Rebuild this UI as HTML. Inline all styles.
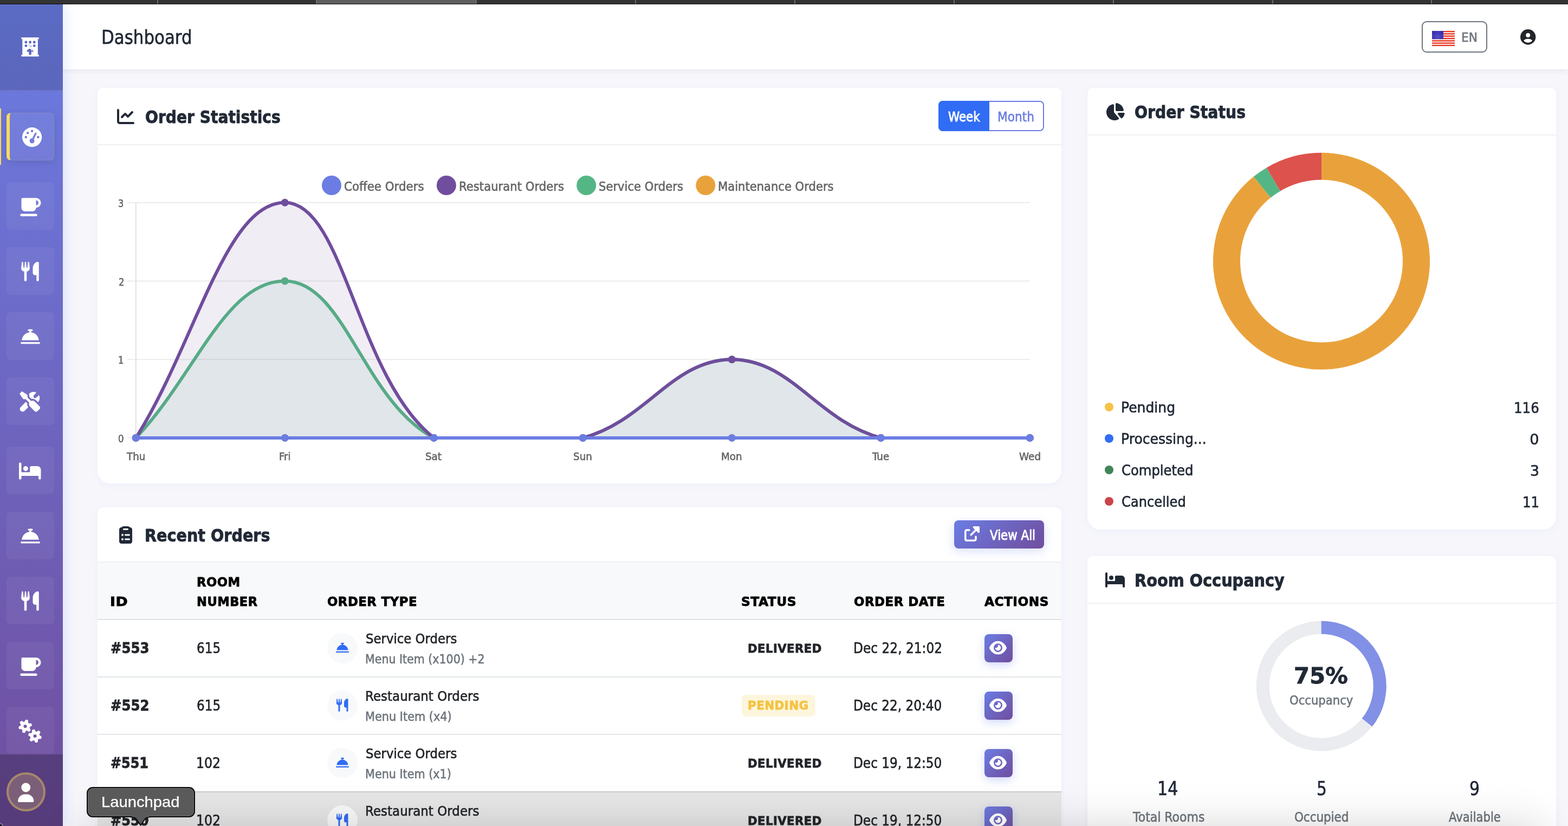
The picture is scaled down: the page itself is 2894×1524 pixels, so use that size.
<!DOCTYPE html>
<html lang="en"><head><meta charset="utf-8"><title>Dashboard</title>
<style>
html,body{margin:0;padding:0}
body{width:2894px;height:1524px;overflow:hidden;position:relative;background:#f6f6fb;font-family:'DejaVu Sans','Liberation Sans',sans-serif}
#p{position:absolute;left:0;top:0;width:2894px;height:1524px;overflow:hidden;will-change:transform}
.b{position:absolute}
.i{position:absolute;overflow:visible}
.t{position:absolute;white-space:nowrap;line-height:1;transform-origin:0 0}
</style></head>
<body><div id="p">
<div class="b" style="left:116px;top:8px;width:2778px;height:120px;background:#fff;box-shadow:0 3px 10px rgba(40,40,80,.07);"></div>
<div class="b" style="left:2624px;top:39px;width:121px;height:58px;border:2px solid #6e757c;border-radius:9px;background:#fff;box-sizing:border-box;"></div>
<svg class="i" style="left:2643px;top:57px;width:42px;height:28px" viewBox="0 0 42 28"><defs><pattern id="st" width="2.1" height="2.1" patternUnits="userSpaceOnUse"><rect width="2.1" height="2.1" fill="#241cab"/><circle cx="1.05" cy="1.05" r="0.5" fill="#c9c9f2"/></pattern></defs><rect width="42" height="28" fill="#fbe9e6"/><rect x="0" y="0.000" width="42" height="2.154" fill="#e8301c"/><rect x="0" y="4.308" width="42" height="2.154" fill="#e8301c"/><rect x="0" y="8.615" width="42" height="2.154" fill="#e8301c"/><rect x="0" y="12.923" width="42" height="2.154" fill="#e8301c"/><rect x="0" y="17.231" width="42" height="2.154" fill="#e8301c"/><rect x="0" y="21.538" width="42" height="2.154" fill="#e8301c"/><rect x="0" y="25.846" width="42" height="2.154" fill="#e8301c"/><rect x="0" y="0" width="21" height="15.1" fill="url(#st)"/></svg>
<svg class="i" style="left:2806.25px;top:54.20px;width:28.40px;height:28.40px;" viewBox="0 0 512 512"><path fill="#222529" d="M399 384.2c-22.1-38.4-63.6-64.2-111-64.2h-64c-47.4 0-88.9 25.8-111 64.2 35.2 39.2 86.2 63.8 143 63.8s107.8-24.7 143-63.8M0 256a256 256 0 1 1 512 0 256 256 0 1 1-512 0m256 16a72 72 0 1 0 0-144 72 72 0 1 0 0 144"/></svg>
<div class="b" style="left:0;top:8px;width:116px;height:1516px;background:linear-gradient(180deg,#6b7de3 0%,#704d9d 100%);box-shadow:4px 0 22px rgba(102,126,234,.16);"></div>
<div class="b" style="left:0px;top:8px;width:116px;height:160px;background:rgba(0,0,0,.14);"></div>
<div class="b" style="left:0px;top:166px;width:116px;height:2px;background:rgba(255,255,255,.1);"></div>
<svg class="i" style="left:37.85px;top:69.00px;width:35.20px;height:35.20px;" viewBox="0 0 512 512"><path fill="#fff" d="M16 24C16 10.7 26.7 0 40 0h432c13.3 0 24 10.7 24 24s-10.7 24-24 24h-8v416h8c13.3 0 24 10.7 24 24s-10.7 24-24 24H40c-13.3 0-24-10.7-24-24s10.7-24 24-24h8V48h-8c-13.3 0-24-10.7-24-24m208 88v32c0 8.8 7.2 16 16 16h32c8.8 0 16-7.2 16-16v-32c0-8.8-7.2-16-16-16h-32c-8.8 0-16 7.2-16 16m-96-16c-8.8 0-16 7.2-16 16v32c0 8.8 7.2 16 16 16h32c8.8 0 16-7.2 16-16v-32c0-8.8-7.2-16-16-16zm96 112v32c0 8.8 7.2 16 16 16h32c8.8 0 16-7.2 16-16v-32c0-8.8-7.2-16-16-16h-32c-8.8 0-16 7.2-16 16M352 96c-8.8 0-16 7.2-16 16v32c0 8.8 7.2 16 16 16h32c8.8 0 16-7.2 16-16v-32c0-8.8-7.2-16-16-16zM112 208v32c0 8.8 7.2 16 16 16h32c8.8 0 16-7.2 16-16v-32c0-8.8-7.2-16-16-16h-32c-8.8 0-16 7.2-16 16m240-16c-8.8 0-16 7.2-16 16v32c0 8.8 7.2 16 16 16h32c8.8 0 16-7.2 16-16v-32c0-8.8-7.2-16-16-16zm-64 192h43.8c9.9 0 17.5-9 14-18.2C332 329.7 297 304 256.1 304s-75.9 25.7-89.7 61.8c-3.5 9.2 4.1 18.2 14 18.2h43.8v80h64v-80z"/></svg>
<svg class="i" style="left:50px;top:78px;width:14px;height:18px" viewBox="50 78 14 18"><path d="M52.9 84.7L55.5 82.1L58.4 82.1L58.4 83.3L54.2 87.1L52.9 87.1Z" fill="#fff"/><path d="M57.0 90.2L58.7 92.9Q59.1 93.5 59.9 92.9" fill="none" stroke="#fff" stroke-width="1.2" stroke-linecap="round"/></svg>
<div class="b" style="left:0;top:166px;width:116px;height:1225px;overflow:hidden">
<div class="b" style="left:0;top:34px;width:2px;height:104px;background:#f9da5d"></div>
<div class="b" style="left:12px;top:42px;width:88px;height:88px;box-sizing:border-box;border-radius:8px;background:rgba(255,255,255,.06);border:1px solid rgba(255,217,61,.14);border-left:6px solid #f9da5d;box-shadow:0 3px 16px rgba(0,0,0,.10);"></div>
<svg class="i" style="left:40.90px;top:68.90px;width:36.20px;height:36.20px;" viewBox="0 0 512 512"><path fill="#fff" d="M0 256a256 256 0 1 1 512 0 256 256 0 1 1-512 0M288 96a32 32 0 1 0-64 0 32 32 0 1 0 64 0m-32 320c35.3 0 64-28.7 64-64 0-16.2-6-31.1-16-42.3l69.5-138.9c5.9-11.9 1.1-26.3-10.7-32.2s-26.3-1.1-32.2 10.7l-69.5 138.9c-1.7-.1-3.4-.2-5.1-.2-35.3 0-64 28.7-64 64s28.7 64 64 64m-80-272a32 32 0 1 0-64 0 32 32 0 1 0 64 0M96 288a32 32 0 1 0 0-64 32 32 0 1 0 0 64m352-32a32 32 0 1 0-64 0 32 32 0 1 0 64 0"/></svg>
<div class="b" style="left:12px;top:170px;width:88px;height:88px;border-radius:8px;background:rgba(255,255,255,.05);"></div>
<svg class="i" style="left:35.45px;top:197.10px;width:40.50px;height:36.00px;" viewBox="0 0 576 512"><path fill="#fff" d="M64 64c0-17.7 14.3-32 32-32h352c70.7 0 128 57.3 128 128s-57.3 128-128 128c0 53-43 96-96 96H160c-53 0-96-43-96-96zm448 96c0-35.3-28.7-64-64-64v128c35.3 0 64-28.7 64-64M64 448h384c17.7 0 32 14.3 32 32s-14.3 32-32 32H64c-17.7 0-32-14.3-32-32s14.3-32 32-32"/></svg>
<div class="b" style="left:12px;top:290px;width:88px;height:88px;border-radius:8px;background:rgba(255,255,255,.05);"></div>
<svg class="i" style="left:37.70px;top:317.10px;width:36.00px;height:36.00px;" viewBox="0 0 512 512"><path fill="#fff" d="M63.9 14.4C63.1 6.2 56.2 0 48 0S32.9 6.2 32 14.3L17.9 149.7c-1.3 6-1.9 12.1-1.9 18.2 0 45.9 35.1 83.6 80 87.7V480c0 17.7 14.3 32 32 32s32-14.3 32-32V255.6c44.9-4.1 80-41.8 80-87.7 0-6.1-.6-12.2-1.9-18.2L223.9 14.3C223.1 6.2 216.2 0 208 0s-15.1 6.2-15.9 14.4l-13.6 135.5c-.6 5.7-5.4 10.1-11.1 10.1-5.8 0-10.6-4.4-11.2-10.2L143.9 14.6C143.2 6.3 136.3 0 128 0s-15.2 6.3-15.9 14.6L99.8 149.8c-.5 5.8-5.4 10.2-11.2 10.2s-10.6-4.4-11.1-10.1zM448 0c-16 0-128 32-128 176v112c0 35.3 28.7 64 64 64h32v128c0 17.7 14.3 32 32 32s32-14.3 32-32V32c0-17.7-14.3-32-32-32"/></svg>
<div class="b" style="left:12px;top:410px;width:88px;height:88px;border-radius:8px;background:rgba(255,255,255,.05);"></div>
<svg class="i" style="left:37.70px;top:437.10px;width:36.00px;height:36.00px;" viewBox="0 0 512 512"><path fill="#fff" d="M216 64c-13.3 0-24 10.7-24 24s10.7 24 24 24h16v33.3C124.8 156.7 40.2 243.7 32.6 352h446.9c-7.7-108.3-92.3-195.3-199.5-206.7V112h16c13.3 0 24-10.7 24-24s-10.7-24-24-24zM24 400c-13.3 0-24 10.7-24 24s10.7 24 24 24h464c13.3 0 24-10.7 24-24s-10.7-24-24-24z"/></svg>
<div class="b" style="left:12px;top:530px;width:88px;height:88px;border-radius:8px;background:rgba(255,255,255,.05);"></div>
<svg class="i" style="left:35.45px;top:557.10px;width:40.50px;height:36.00px;" viewBox="0 0 576 512"><path fill="#fff" d="M70.8-6.7c5.4-5.4 13.8-6.2 20.2-2l118.9 79.2c8.9 5.9 14.2 15.9 14.2 26.6v49.6l90.8 90.8c33.3-15 73.9-8.9 101.2 18.5l126.1 126.1c18.7 18.7 18.7 49.1 0 67.9l-60.1 60.1c-18.7 18.7-49.1 18.7-67.9 0L288.1 384c-27.4-27.4-33.5-67.9-18.5-101.2L178.8 192h-49.6c-10.7 0-20.7-5.3-26.6-14.2L23.4 58.9c-4.2-6.3-3.4-14.8 2-20.2zm145 303.5c-6.3 36.9 2.3 75.9 26.2 107.2l-94.9 95c-28.1 28.1-73.7 28.1-101.8 0s-28.1-73.7 0-101.8l135.4-135.5 35.2 35.1zM384.1 0c20.1 0 39.4 3.7 57.1 10.5 10 3.8 11.8 16.5 4.3 24.1l-56.7 56.7c-3 3-4.7 7.1-4.7 11.3V144c0 8.8 7.2 16 16 16h41.4c4.2 0 8.3-1.7 11.3-4.7l56.7-56.7c7.6-7.5 20.3-5.7 24.1 4.3 6.8 17.7 10.5 37 10.5 57.1 0 43.2-17.2 82.3-45 111.1L450 222c-33.1-33-78.5-45.7-121.1-38.4l-56.8-56.8V97.1l-.2-5c-.8-12.4-4.4-24.3-10.5-34.9C290.8 22.2 334.8 0 384.1-.1z"/></svg>
<div class="b" style="left:12px;top:658px;width:88px;height:88px;border-radius:8px;background:rgba(255,255,255,.05);"></div>
<svg class="i" style="left:35.45px;top:685.10px;width:40.50px;height:36.00px;" viewBox="0 0 576 512"><path fill="#fff" d="M32 32c17.7 0 32 14.3 32 32v224h224V160c0-17.7 14.3-32 32-32h160c53 0 96 43 96 96v224c0 17.7-14.3 32-32 32s-32-14.3-32-32v-64H64v64c0 17.7-14.3 32-32 32S0 465.7 0 448V64c0-17.7 14.3-32 32-32m80 160a64 64 0 1 1 128 0 64 64 0 1 1-128 0"/></svg>
<div class="b" style="left:12px;top:778px;width:88px;height:88px;border-radius:8px;background:rgba(255,255,255,.05);"></div>
<svg class="i" style="left:37.70px;top:805.10px;width:36.00px;height:36.00px;" viewBox="0 0 512 512"><path fill="#fff" d="M216 64c-13.3 0-24 10.7-24 24s10.7 24 24 24h16v33.3C124.8 156.7 40.2 243.7 32.6 352h446.9c-7.7-108.3-92.3-195.3-199.5-206.7V112h16c13.3 0 24-10.7 24-24s-10.7-24-24-24zM24 400c-13.3 0-24 10.7-24 24s10.7 24 24 24h464c13.3 0 24-10.7 24-24s-10.7-24-24-24z"/></svg>
<div class="b" style="left:12px;top:898px;width:88px;height:88px;border-radius:8px;background:rgba(255,255,255,.05);"></div>
<svg class="i" style="left:37.70px;top:925.10px;width:36.00px;height:36.00px;" viewBox="0 0 512 512"><path fill="#fff" d="M63.9 14.4C63.1 6.2 56.2 0 48 0S32.9 6.2 32 14.3L17.9 149.7c-1.3 6-1.9 12.1-1.9 18.2 0 45.9 35.1 83.6 80 87.7V480c0 17.7 14.3 32 32 32s32-14.3 32-32V255.6c44.9-4.1 80-41.8 80-87.7 0-6.1-.6-12.2-1.9-18.2L223.9 14.3C223.1 6.2 216.2 0 208 0s-15.1 6.2-15.9 14.4l-13.6 135.5c-.6 5.7-5.4 10.1-11.1 10.1-5.8 0-10.6-4.4-11.2-10.2L143.9 14.6C143.2 6.3 136.3 0 128 0s-15.2 6.3-15.9 14.6L99.8 149.8c-.5 5.8-5.4 10.2-11.2 10.2s-10.6-4.4-11.1-10.1zM448 0c-16 0-128 32-128 176v112c0 35.3 28.7 64 64 64h32v128c0 17.7 14.3 32 32 32s32-14.3 32-32V32c0-17.7-14.3-32-32-32"/></svg>
<div class="b" style="left:12px;top:1018px;width:88px;height:88px;border-radius:8px;background:rgba(255,255,255,.05);"></div>
<svg class="i" style="left:35.45px;top:1045.10px;width:40.50px;height:36.00px;" viewBox="0 0 576 512"><path fill="#fff" d="M64 64c0-17.7 14.3-32 32-32h352c70.7 0 128 57.3 128 128s-57.3 128-128 128c0 53-43 96-96 96H160c-53 0-96-43-96-96zm448 96c0-35.3-28.7-64-64-64v128c35.3 0 64-28.7 64-64M64 448h384c17.7 0 32 14.3 32 32s-14.3 32-32 32H64c-17.7 0-32-14.3-32-32s14.3-32 32-32"/></svg>
<div class="b" style="left:12px;top:1138px;width:88px;height:88px;border-radius:8px;background:rgba(255,255,255,.05);"></div>
<svg class="i" style="left:33.20px;top:1165.10px;width:45.00px;height:36.00px;" viewBox="0 0 640 512"><path fill="#fff" d="M415.9 210.5c12.2-3.3 25 2.5 30.5 13.8l18.6 37.6c10.3 1.4 20.4 4.2 29.9 8.1l35-23.3c10.5-7 24.4-5.6 33.3 3.3l19.2 19.2c8.9 8.9 10.3 22.9 3.3 33.3l-23.3 34.9c1.9 4.7 3.6 9.6 5 14.7s2.3 10.1 3 15.2l37.7 18.6c11.3 5.6 17.1 18.4 13.8 30.5l-7 26.2c-3.3 12.1-14.6 20.3-27.2 19.5l-42-2.7c-6.3 8.1-13.6 15.6-21.9 22l2.7 41.9c.8 12.6-7.4 24-19.5 27.2l-26.2 7c-12.2 3.3-24.9-2.5-30.5-13.8l-18.6-37.6c-10.3-1.4-20.4-4.2-29.9-8.1l-35 23.3c-10.5 7-24.4 5.6-33.3-3.3l-19.2-19.2c-8.9-8.9-10.3-22.8-3.3-33.3l23.3-35c-1.9-4.7-3.6-9.6-5-14.7s-2.3-10.2-3-15.2L288.6 382c-11.3-5.6-17-18.4-13.8-30.5l7-26.2c3.3-12.1 14.6-20.3 27.2-19.5l41.9 2.7c6.3-8.1 13.6-15.6 21.9-22l-2.7-41.8c-.8-12.6 7.4-24 19.5-27.2l26.2-7zM448.4 340a44 44 0 1 0 .1 88 44 44 0 1 0-.1-88M224.9-45.5l26.2 7c12.1 3.3 20.3 14.7 19.5 27.2l-2.7 41.8c8.3 6.4 15.6 13.8 21.9 22l42-2.7c12.5-.8 23.9 7.4 27.2 19.5l7 26.2c3.2 12.1-2.5 24.9-13.8 30.5l-37.7 18.6c-.7 5.1-1.7 10.2-3 15.2s-3.1 10-5 14.7l23.3 35c7 10.5 5.6 24.4-3.3 33.3L307.3 262c-8.9 8.9-22.8 10.3-33.3 3.3L239 242c-9.5 3.9-19.6 6.7-29.9 8.1l-18.6 37.6c-5.6 11.3-18.4 17-30.5 13.8l-26.2-7c-12.2-3.3-20.3-14.7-19.5-27.2l2.7-41.9c-8.3-6.4-15.6-13.8-21.9-22l-42 2.7c-12.5.8-23.9-7.4-27.2-19.5l-7-26.2c-3.2-12.1 2.5-24.9 13.8-30.5l37.7-18.6c.7-5.1 1.7-10.1 3-15.2 1.4-5.1 3-10 5-14.7L55.1 46.5c-7-10.5-5.6-24.4 3.3-33.3L77.6-6c8.9-8.9 22.8-10.3 33.3-3.3l35 23.3c9.5-3.9 19.6-6.7 29.9-8.1l18.6-37.6c5.6-11.3 18.3-17 30.5-13.8M192.4 84a44 44 0 1 0 0 88 44 44 0 1 0 0-88"/></svg>
</div>
<div class="b" style="left:0px;top:1391px;width:116px;height:133px;background:rgba(0,0,0,.22);border-top:1px solid rgba(255,255,255,.1);box-sizing:border-box;"></div>
<div class="b" style="left:12px;top:1425px;width:72px;height:72px;border-radius:50%;box-sizing:border-box;border:4px solid #a5896b;background:#7b5f78;"></div>
<svg class="i" style="left:0;top:1512px;width:12px;height:12px" viewBox="0 1512 12 12"><circle cx="-1" cy="1525" r="6.2" fill="none" stroke="rgba(255,255,255,.22)" stroke-width="2.4"/><circle cx="-1" cy="1525" r="4.4" fill="#050505"/></svg>
<svg class="i" style="left:32.05px;top:1443.52px;width:31.50px;height:36.00px;" viewBox="0 0 448 512"><path fill="#fff" d="M224 248a120 120 0 1 0 0-240 120 120 0 1 0 0 240m-29.7 56C95.8 304 16 383.8 16 482.3c0 16.4 13.3 29.7 29.7 29.7h356.6c16.4 0 29.7-13.3 29.7-29.7 0-98.5-79.8-178.3-178.3-178.3z"/></svg>
<div class="b" style="left:180px;top:162px;width:1779px;height:730px;background:#fff;border-radius:11px 11px 24px 24px;box-shadow:0 3px 14px rgba(102,126,234,.055);"></div>
<div class="b" style="left:180px;top:266px;width:1779px;height:2px;background:#f0f0f0;"></div>
<div class="b" style="left:2007px;top:162px;width:865px;height:815px;background:#fff;border-radius:11px 11px 24px 24px;box-shadow:0 3px 14px rgba(102,126,234,.055);"></div>
<div class="b" style="left:2007px;top:248px;width:865px;height:2px;background:#f0f0f0;"></div>
<div class="b" style="left:180px;top:936px;width:1779px;height:700px;background:#fff;border-radius:11px 11px 24px 24px;box-shadow:0 3px 14px rgba(102,126,234,.055);"></div>
<div class="b" style="left:180px;top:1036px;width:1779px;height:2px;background:#f0f0f0;"></div>
<div class="b" style="left:2007px;top:1026px;width:865px;height:700px;background:#fff;border-radius:11px 11px 24px 24px;box-shadow:0 3px 14px rgba(102,126,234,.055);"></div>
<div class="b" style="left:2007px;top:1112px;width:865px;height:2px;background:#f0f0f0;"></div>
<svg class="i" style="left:216.00px;top:198.90px;width:32.00px;height:32.00px;" viewBox="0 0 512 512"><path fill="#212936" d="M64 64c0-17.7-14.3-32-32-32S0 46.3 0 64v336c0 44.2 35.8 80 80 80h400c17.7 0 32-14.3 32-32s-14.3-32-32-32H80c-8.8 0-16-7.2-16-16zm406.6 86.6c12.5-12.5 12.5-32.8 0-45.3s-32.8-12.5-45.3 0L320 210.7l-57.4-57.3c-12.5-12.5-32.8-12.5-45.3 0l-96 96c-12.5 12.5-12.5 32.8 0 45.3s32.8 12.5 45.3 0l73.4-73.4 57.4 57.4c12.5 12.5 32.8 12.5 45.3 0l128-128z"/></svg>
<div class="b" style="left:1732px;top:186px;width:195px;height:56px;border-radius:8px;background:#fff;border:2px solid #6b7de3;box-sizing:border-box;"></div>
<div class="b" style="left:1732px;top:186px;width:94px;height:56px;border-radius:8px 0 0 8px;background:#316cf4;"></div>
<svg class="i" style="left:0;top:0;width:2894px;height:1524px" viewBox="0 0 2894 1524"><rect x="235" y="806.90" width="1665.80" height="2" fill="#ececec"/><rect x="235" y="662.20" width="1665.80" height="2" fill="#ececec"/><rect x="235" y="517.50" width="1665.80" height="2" fill="#ececec"/><rect x="235" y="372.80" width="1665.80" height="2" fill="#ececec"/><rect x="249.80" y="373.80" width="2" height="434.10" fill="#e2e2e2"/><path d="M250.80 807.90C360.80 807.90 415.80 807.90 525.80 807.90C635.80 807.90 690.80 807.90 800.80 807.90C910.80 807.90 965.80 807.90 1075.80 807.90C1185.80 807.90 1240.80 807.90 1350.80 807.90C1460.80 807.90 1515.80 807.90 1625.80 807.90C1735.80 807.90 1790.80 807.90 1900.80 807.90" fill="none" stroke="#e9a23b" stroke-width="6" stroke-linejoin="round" stroke-linecap="butt"/><circle cx="250.80" cy="807.90" r="7" fill="#e9a23b"/><circle cx="525.80" cy="807.90" r="7" fill="#e9a23b"/><circle cx="800.80" cy="807.90" r="7" fill="#e9a23b"/><circle cx="1075.80" cy="807.90" r="7" fill="#e9a23b"/><circle cx="1350.80" cy="807.90" r="7" fill="#e9a23b"/><circle cx="1625.80" cy="807.90" r="7" fill="#e9a23b"/><circle cx="1900.80" cy="807.90" r="7" fill="#e9a23b"/><path d="M250.80 807.90C360.80 692.14 415.80 518.50 525.80 518.50C635.80 518.50 670.53 739.36 800.80 807.90C890.53 807.90 972.51 807.90 1075.80 807.90C1192.51 777.19 1240.80 663.20 1350.80 663.20C1460.80 663.20 1509.09 777.19 1625.80 807.90C1729.09 807.90 1790.80 807.90 1900.80 807.90L1900.80 807.9L250.80 807.9Z" fill="#55b685" fill-opacity="0.1"/><path d="M250.80 807.90C360.80 692.14 415.80 518.50 525.80 518.50C635.80 518.50 670.53 739.36 800.80 807.90C890.53 807.90 972.51 807.90 1075.80 807.90C1192.51 777.19 1240.80 663.20 1350.80 663.20C1460.80 663.20 1509.09 777.19 1625.80 807.90C1729.09 807.90 1790.80 807.90 1900.80 807.90" fill="none" stroke="#55b685" stroke-width="6" stroke-linejoin="round" stroke-linecap="butt"/><circle cx="250.80" cy="807.90" r="7" fill="#55b685"/><circle cx="525.80" cy="518.50" r="7" fill="#55b685"/><circle cx="800.80" cy="807.90" r="7" fill="#55b685"/><circle cx="1075.80" cy="807.90" r="7" fill="#55b685"/><circle cx="1350.80" cy="663.20" r="7" fill="#55b685"/><circle cx="1625.80" cy="807.90" r="7" fill="#55b685"/><circle cx="1900.80" cy="807.90" r="7" fill="#55b685"/><path d="M250.80 807.90C360.80 634.26 415.80 373.80 525.80 373.80C635.80 373.80 657.49 694.79 800.80 807.90C877.49 807.90 972.51 807.90 1075.80 807.90C1192.51 777.19 1240.80 663.20 1350.80 663.20C1460.80 663.20 1509.09 777.19 1625.80 807.90C1729.09 807.90 1790.80 807.90 1900.80 807.90L1900.80 807.9L250.80 807.9Z" fill="#704d9d" fill-opacity="0.1"/><path d="M250.80 807.90C360.80 634.26 415.80 373.80 525.80 373.80C635.80 373.80 657.49 694.79 800.80 807.90C877.49 807.90 972.51 807.90 1075.80 807.90C1192.51 777.19 1240.80 663.20 1350.80 663.20C1460.80 663.20 1509.09 777.19 1625.80 807.90C1729.09 807.90 1790.80 807.90 1900.80 807.90" fill="none" stroke="#704d9d" stroke-width="6" stroke-linejoin="round" stroke-linecap="butt"/><circle cx="250.80" cy="807.90" r="7" fill="#704d9d"/><circle cx="525.80" cy="373.80" r="7" fill="#704d9d"/><circle cx="800.80" cy="807.90" r="7" fill="#704d9d"/><circle cx="1075.80" cy="807.90" r="7" fill="#704d9d"/><circle cx="1350.80" cy="663.20" r="7" fill="#704d9d"/><circle cx="1625.80" cy="807.90" r="7" fill="#704d9d"/><circle cx="1900.80" cy="807.90" r="7" fill="#704d9d"/><path d="M250.80 807.90C360.80 807.90 415.80 807.90 525.80 807.90C635.80 807.90 690.80 807.90 800.80 807.90C910.80 807.90 965.80 807.90 1075.80 807.90C1185.80 807.90 1240.80 807.90 1350.80 807.90C1460.80 807.90 1515.80 807.90 1625.80 807.90C1735.80 807.90 1790.80 807.90 1900.80 807.90" fill="none" stroke="#6b7de3" stroke-width="6" stroke-linejoin="round" stroke-linecap="butt"/><circle cx="250.80" cy="807.90" r="7" fill="#6b7de3"/><circle cx="525.80" cy="807.90" r="7" fill="#6b7de3"/><circle cx="800.80" cy="807.90" r="7" fill="#6b7de3"/><circle cx="1075.80" cy="807.90" r="7" fill="#6b7de3"/><circle cx="1350.80" cy="807.90" r="7" fill="#6b7de3"/><circle cx="1625.80" cy="807.90" r="7" fill="#6b7de3"/><circle cx="1900.80" cy="807.90" r="7" fill="#6b7de3"/><circle cx="612" cy="342" r="18" fill="#6b7de3"/><circle cx="823.9" cy="342" r="18" fill="#704d9d"/><circle cx="1082.2" cy="342" r="18" fill="#55b685"/><circle cx="1302.3" cy="342" r="18" fill="#e9a23b"/></svg>
<svg class="i" style="left:2040.47px;top:189.94px;width:36.00px;height:32.00px;" viewBox="0 0 576 512"><path fill="#212936" d="M512.4 240h-176c-17.7 0-32-14.3-32-32V32c0-17.7 14.4-32.2 31.9-29.9 107 14.2 191.8 99 206 206 2.3 17.5-12.2 31.9-29.9 31.9M222.6 37.2c18.1-3.8 33.8 11 33.8 29.5V264c0 5.6 2 11 5.5 15.3L394 438.7c11.7 14.1 9.2 35.4-6.9 44.1C353 501.4 313.9 512 272.4 512c-132.5 0-240-107.5-240-240 0-115.5 81.5-211.9 190.2-234.8M477.8 288h64c18.5 0 33.3 15.7 29.5 33.8-10.2 48.4-35 91.4-69.6 124.2-12.3 11.7-31.6 9.2-42.4-3.9l-84.4-101.7c-17.3-20.9-2.4-52.4 24.6-52.4h78.2z"/></svg>
<svg class="i" style="left:0;top:0;width:2894px;height:1524px" viewBox="0 0 2894 1524"><path d="M2439.00 281.80A200.0 200.0 0 1 1 2313.76 325.87L2345.07 364.85A150.0 150.0 0 1 0 2439.00 331.80Z" fill="#e9a23b"/><path d="M2313.76 325.87A200.0 200.0 0 0 1 2337.61 309.41L2362.96 352.50A150.0 150.0 0 0 0 2345.07 364.85Z" fill="#55b685"/><path d="M2337.61 309.41A200.0 200.0 0 0 1 2439.00 281.80L2439.00 331.80A150.0 150.0 0 0 0 2362.96 352.50Z" fill="#dd524c"/><circle cx="2047" cy="751" r="8" fill="#f5c344"/><circle cx="2047" cy="809" r="8" fill="#316cf4"/><circle cx="2047" cy="867" r="8" fill="#408558"/><circle cx="2047" cy="925" r="8" fill="#cb444a"/></svg>
<svg class="i" style="left:220.20px;top:970.50px;width:24.00px;height:32.00px;" viewBox="0 0 384 512"><path fill="#212936" d="M311.4 32h8.6c35.3 0 64 28.7 64 64v352c0 35.3-28.7 64-64 64H64c-35.3 0-64-28.7-64-64V96c0-35.3 28.7-64 64-64h8.6c11-19.1 31.7-32 55.4-32h128c23.7 0 44.4 12.9 55.4 32M248 112c13.3 0 24-10.7 24-24s-10.7-24-24-24H136c-13.3 0-24 10.7-24 24s10.7 24 24 24zM128 256a32 32 0 1 0-64 0 32 32 0 1 0 64 0m32 0c0 13.3 10.7 24 24 24h112c13.3 0 24-10.7 24-24s-10.7-24-24-24H184c-13.3 0-24 10.7-24 24m0 128c0 13.3 10.7 24 24 24h112c13.3 0 24-10.7 24-24s-10.7-24-24-24H184c-13.3 0-24 10.7-24 24m-64 32a32 32 0 1 0 0-64 32 32 0 1 0 0 64"/></svg>
<div class="b" style="left:1761px;top:960px;width:166px;height:52px;border-radius:8px;background:linear-gradient(135deg,#6b7de3 0%,#704d9d 100%);box-shadow:0 5px 18px rgba(102,126,234,.24);"></div>
<svg class="i" style="left:1779.90px;top:971.40px;width:28.00px;height:28.00px;" viewBox="0 0 512 512"><path fill="#fff" d="M290.4 19.8C295.4 7.8 307.1 0 320 0h160c17.7 0 32 14.3 32 32v160c0 12.9-7.8 24.6-19.8 29.6s-25.7 2.2-34.9-6.9L400 157.3 246.6 310.6c-12.5 12.5-32.8 12.5-45.3 0s-12.5-32.8 0-45.3L354.7 112l-57.3-57.4c-9.2-9.2-11.9-22.9-6.9-34.9zM0 176c0-44.2 35.8-80 80-80h80c17.7 0 32 14.3 32 32s-14.3 32-32 32H80c-8.8 0-16 7.2-16 16v256c0 8.8 7.2 16 16 16h256c8.8 0 16-7.2 16-16v-80c0-17.7 14.3-32 32-32s32 14.3 32 32v80c0 44.2-35.8 80-80 80H80c-44.2 0-80-35.8-80-80z"/></svg>
<div class="b" style="left:180px;top:1038px;width:1779px;height:104px;background:#f8f9fa;"></div>
<div class="b" style="left:180px;top:1142px;width:1779px;height:2px;background:#dfe2e6;"></div>
<div class="b" style="left:180px;top:1248px;width:1779px;height:2px;background:#e3e5e8;"></div>
<div class="b" style="left:604px;top:1168px;width:56px;height:56px;border-radius:50%;background:#f8f9fa;"></div>
<svg class="i" style="left:620.00px;top:1183.00px;width:24.00px;height:24.00px;" viewBox="0 0 512 512"><path fill="#316cf4" d="M216 64c-13.3 0-24 10.7-24 24s10.7 24 24 24h16v33.3C124.8 156.7 40.2 243.7 32.6 352h446.9c-7.7-108.3-92.3-195.3-199.5-206.7V112h16c13.3 0 24-10.7 24-24s-10.7-24-24-24zM24 400c-13.3 0-24 10.7-24 24s10.7 24 24 24h464c13.3 0 24-10.7 24-24s-10.7-24-24-24z"/></svg>
<div class="b" style="left:1817px;top:1170px;width:52px;height:52px;border-radius:8px;background:linear-gradient(135deg,#6b7de3 0%,#704d9d 100%);box-shadow:0 5px 16px rgba(102,126,234,.30);"></div>
<svg class="i" style="left:1826.33px;top:1181.30px;width:31.95px;height:28.40px;" viewBox="0 0 576 512"><path fill="#fff" d="M288 32c-80.8 0-145.5 36.8-192.6 80.6-46.8 43.5-78.1 95.4-93 131.1-3.3 7.9-3.3 16.7 0 24.6 14.9 35.7 46.2 87.7 93 131.1C142.5 443.1 207.2 480 288 480s145.5-36.8 192.6-80.6c46.8-43.5 78.1-95.4 93-131.1 3.3-7.9 3.3-16.7 0-24.6-14.9-35.7-46.2-87.7-93-131.1C433.5 68.9 368.8 32 288 32M144 256a144 144 0 1 1 288 0 144 144 0 1 1-288 0m144-64c0 35.3-28.7 64-64 64-11.5 0-22.3-3-31.7-8.4-1 10.9-.1 22.1 2.9 33.2 13.7 51.2 66.4 81.6 117.6 67.9s81.6-66.4 67.9-117.6c-12.2-45.7-55.5-74.8-101.1-70.8 5.3 9.3 8.4 20.1 8.4 31.7"/></svg>
<div class="b" style="left:180px;top:1354px;width:1779px;height:2px;background:#e3e5e8;"></div>
<div class="b" style="left:604px;top:1274px;width:56px;height:56px;border-radius:50%;background:#f8f9fa;"></div>
<svg class="i" style="left:620.00px;top:1289.00px;width:24.00px;height:24.00px;" viewBox="0 0 512 512"><path fill="#316cf4" d="M63.9 14.4C63.1 6.2 56.2 0 48 0S32.9 6.2 32 14.3L17.9 149.7c-1.3 6-1.9 12.1-1.9 18.2 0 45.9 35.1 83.6 80 87.7V480c0 17.7 14.3 32 32 32s32-14.3 32-32V255.6c44.9-4.1 80-41.8 80-87.7 0-6.1-.6-12.2-1.9-18.2L223.9 14.3C223.1 6.2 216.2 0 208 0s-15.1 6.2-15.9 14.4l-13.6 135.5c-.6 5.7-5.4 10.1-11.1 10.1-5.8 0-10.6-4.4-11.2-10.2L143.9 14.6C143.2 6.3 136.3 0 128 0s-15.2 6.3-15.9 14.6L99.8 149.8c-.5 5.8-5.4 10.2-11.2 10.2s-10.6-4.4-11.1-10.1zM448 0c-16 0-128 32-128 176v112c0 35.3 28.7 64 64 64h32v128c0 17.7 14.3 32 32 32s32-14.3 32-32V32c0-17.7-14.3-32-32-32"/></svg>
<div class="b" style="left:1369px;top:1282px;width:136px;height:40px;border-radius:8px;background:#fdf6dd;"></div>
<div class="b" style="left:1817px;top:1276px;width:52px;height:52px;border-radius:8px;background:linear-gradient(135deg,#6b7de3 0%,#704d9d 100%);box-shadow:0 5px 16px rgba(102,126,234,.30);"></div>
<svg class="i" style="left:1826.33px;top:1287.30px;width:31.95px;height:28.40px;" viewBox="0 0 576 512"><path fill="#fff" d="M288 32c-80.8 0-145.5 36.8-192.6 80.6-46.8 43.5-78.1 95.4-93 131.1-3.3 7.9-3.3 16.7 0 24.6 14.9 35.7 46.2 87.7 93 131.1C142.5 443.1 207.2 480 288 480s145.5-36.8 192.6-80.6c46.8-43.5 78.1-95.4 93-131.1 3.3-7.9 3.3-16.7 0-24.6-14.9-35.7-46.2-87.7-93-131.1C433.5 68.9 368.8 32 288 32M144 256a144 144 0 1 1 288 0 144 144 0 1 1-288 0m144-64c0 35.3-28.7 64-64 64-11.5 0-22.3-3-31.7-8.4-1 10.9-.1 22.1 2.9 33.2 13.7 51.2 66.4 81.6 117.6 67.9s81.6-66.4 67.9-117.6c-12.2-45.7-55.5-74.8-101.1-70.8 5.3 9.3 8.4 20.1 8.4 31.7"/></svg>
<div class="b" style="left:180px;top:1460px;width:1779px;height:2px;background:#e3e5e8;"></div>
<div class="b" style="left:604px;top:1380px;width:56px;height:56px;border-radius:50%;background:#f8f9fa;"></div>
<svg class="i" style="left:620.00px;top:1395.00px;width:24.00px;height:24.00px;" viewBox="0 0 512 512"><path fill="#316cf4" d="M216 64c-13.3 0-24 10.7-24 24s10.7 24 24 24h16v33.3C124.8 156.7 40.2 243.7 32.6 352h446.9c-7.7-108.3-92.3-195.3-199.5-206.7V112h16c13.3 0 24-10.7 24-24s-10.7-24-24-24zM24 400c-13.3 0-24 10.7-24 24s10.7 24 24 24h464c13.3 0 24-10.7 24-24s-10.7-24-24-24z"/></svg>
<div class="b" style="left:1817px;top:1382px;width:52px;height:52px;border-radius:8px;background:linear-gradient(135deg,#6b7de3 0%,#704d9d 100%);box-shadow:0 5px 16px rgba(102,126,234,.30);"></div>
<svg class="i" style="left:1826.33px;top:1393.30px;width:31.95px;height:28.40px;" viewBox="0 0 576 512"><path fill="#fff" d="M288 32c-80.8 0-145.5 36.8-192.6 80.6-46.8 43.5-78.1 95.4-93 131.1-3.3 7.9-3.3 16.7 0 24.6 14.9 35.7 46.2 87.7 93 131.1C142.5 443.1 207.2 480 288 480s145.5-36.8 192.6-80.6c46.8-43.5 78.1-95.4 93-131.1 3.3-7.9 3.3-16.7 0-24.6-14.9-35.7-46.2-87.7-93-131.1C433.5 68.9 368.8 32 288 32M144 256a144 144 0 1 1 288 0 144 144 0 1 1-288 0m144-64c0 35.3-28.7 64-64 64-11.5 0-22.3-3-31.7-8.4-1 10.9-.1 22.1 2.9 33.2 13.7 51.2 66.4 81.6 117.6 67.9s81.6-66.4 67.9-117.6c-12.2-45.7-55.5-74.8-101.1-70.8 5.3 9.3 8.4 20.1 8.4 31.7"/></svg>
<div class="b" style="left:180px;top:1460px;width:1779px;height:110px;background:#e6e6e6;"></div>
<div class="b" style="left:180px;top:1460px;width:1779px;height:2px;background:#cbcbcb;"></div>
<div class="b" style="left:604px;top:1486px;width:56px;height:56px;border-radius:50%;background:#f8f9fa;"></div>
<svg class="i" style="left:620.00px;top:1501.00px;width:24.00px;height:24.00px;" viewBox="0 0 512 512"><path fill="#316cf4" d="M63.9 14.4C63.1 6.2 56.2 0 48 0S32.9 6.2 32 14.3L17.9 149.7c-1.3 6-1.9 12.1-1.9 18.2 0 45.9 35.1 83.6 80 87.7V480c0 17.7 14.3 32 32 32s32-14.3 32-32V255.6c44.9-4.1 80-41.8 80-87.7 0-6.1-.6-12.2-1.9-18.2L223.9 14.3C223.1 6.2 216.2 0 208 0s-15.1 6.2-15.9 14.4l-13.6 135.5c-.6 5.7-5.4 10.1-11.1 10.1-5.8 0-10.6-4.4-11.2-10.2L143.9 14.6C143.2 6.3 136.3 0 128 0s-15.2 6.3-15.9 14.6L99.8 149.8c-.5 5.8-5.4 10.2-11.2 10.2s-10.6-4.4-11.1-10.1zM448 0c-16 0-128 32-128 176v112c0 35.3 28.7 64 64 64h32v128c0 17.7 14.3 32 32 32s32-14.3 32-32V32c0-17.7-14.3-32-32-32"/></svg>
<div class="b" style="left:1817px;top:1488px;width:52px;height:52px;border-radius:8px;background:linear-gradient(135deg,#6b7de3 0%,#704d9d 100%);box-shadow:0 5px 16px rgba(102,126,234,.30);"></div>
<svg class="i" style="left:1826.33px;top:1499.30px;width:31.95px;height:28.40px;" viewBox="0 0 576 512"><path fill="#fff" d="M288 32c-80.8 0-145.5 36.8-192.6 80.6-46.8 43.5-78.1 95.4-93 131.1-3.3 7.9-3.3 16.7 0 24.6 14.9 35.7 46.2 87.7 93 131.1C142.5 443.1 207.2 480 288 480s145.5-36.8 192.6-80.6c46.8-43.5 78.1-95.4 93-131.1 3.3-7.9 3.3-16.7 0-24.6-14.9-35.7-46.2-87.7-93-131.1C433.5 68.9 368.8 32 288 32M144 256a144 144 0 1 1 288 0 144 144 0 1 1-288 0m144-64c0 35.3-28.7 64-64 64-11.5 0-22.3-3-31.7-8.4-1 10.9-.1 22.1 2.9 33.2 13.7 51.2 66.4 81.6 117.6 67.9s81.6-66.4 67.9-117.6c-12.2-45.7-55.5-74.8-101.1-70.8 5.3 9.3 8.4 20.1 8.4 31.7"/></svg>
<svg class="i" style="left:2040.40px;top:1053.70px;width:36.00px;height:32.00px;" viewBox="0 0 576 512"><path fill="#212936" d="M32 32c17.7 0 32 14.3 32 32v224h224V160c0-17.7 14.3-32 32-32h160c53 0 96 43 96 96v224c0 17.7-14.3 32-32 32s-32-14.3-32-32v-64H64v64c0 17.7-14.3 32-32 32S0 465.7 0 448V64c0-17.7 14.3-32 32-32m80 160a64 64 0 1 1 128 0 64 64 0 1 1-128 0"/></svg>
<svg class="i" style="left:0;top:0;width:2894px;height:1524px" viewBox="0 0 2894 1524"><circle cx="2438.7" cy="1265.7" r="108" fill="none" stroke="#eaecef" stroke-width="24"/><path d="M2438.7 1157.7A108 108 0 0 1 2523.14 1333.04" fill="none" stroke="#8290e6" stroke-width="24"/></svg>
<span class="t" style="left:187.22px;top:51.77px;font-size:34.81px;font-weight:400;-webkit-text-stroke:0.65px;color:#212936;transform:scaleX(0.8880);">Dashboard</span>
<span class="t" style="left:2696.97px;top:57.67px;font-size:23.61px;font-weight:400;-webkit-text-stroke:0.65px;color:#6e757c;transform:scaleX(0.9211);">EN</span>
<span class="t" style="left:267.78px;top:200.68px;font-size:31.49px;font-weight:700;-webkit-text-stroke:0.85px;color:#212936;transform:scaleX(0.8938);">Order Statistics</span>
<span class="t" style="left:1749.58px;top:202.72px;font-size:25.06px;font-weight:400;-webkit-text-stroke:0.9px;color:#fff;transform:scaleX(0.8551);">Week</span>
<span class="t" style="left:1841.05px;top:202.77px;font-size:25.21px;font-weight:400;-webkit-text-stroke:0.65px;color:#6b7de3;transform:scaleX(0.8600);">Month</span>
<span class="t" style="left:635.27px;top:332.87px;font-size:23.61px;font-weight:400;-webkit-text-stroke:0.65px;color:#666666;transform:scaleX(0.9043);">Coffee Orders</span>
<span class="t" style="left:846.92px;top:332.87px;font-size:23.61px;font-weight:400;-webkit-text-stroke:0.65px;color:#666666;transform:scaleX(0.8975);">Restaurant Orders</span>
<span class="t" style="left:1105.21px;top:332.87px;font-size:23.61px;font-weight:400;-webkit-text-stroke:0.65px;color:#666666;transform:scaleX(0.8952);">Service Orders</span>
<span class="t" style="left:1325.32px;top:332.87px;font-size:23.61px;font-weight:400;-webkit-text-stroke:0.65px;color:#666666;transform:scaleX(0.8939);">Maintenance Orders</span>
<span class="t" style="left:218.29px;top:799.07px;font-size:20.21px;font-weight:400;-webkit-text-stroke:0.65px;color:#666666;transform:scaleX(0.8207);">0</span>
<span class="t" style="left:218.28px;top:654.37px;font-size:20.21px;font-weight:400;-webkit-text-stroke:0.65px;color:#666666;transform:scaleX(0.8061);">1</span>
<span class="t" style="left:218.64px;top:509.67px;font-size:20.21px;font-weight:400;-webkit-text-stroke:0.65px;color:#666666;transform:scaleX(0.8066);">2</span>
<span class="t" style="left:218.48px;top:364.97px;font-size:20.21px;font-weight:400;-webkit-text-stroke:0.65px;color:#666666;transform:scaleX(0.8038);">3</span>
<span class="t" style="left:234.24px;top:832.17px;font-size:20.11px;font-weight:400;-webkit-text-stroke:0.65px;color:#666666;transform:scaleX(0.9076);">Thu</span>
<span class="t" style="left:514.72px;top:832.17px;font-size:20.11px;font-weight:400;-webkit-text-stroke:0.65px;color:#666666;transform:scaleX(0.9024);">Fri</span>
<span class="t" style="left:785.13px;top:832.17px;font-size:20.11px;font-weight:400;-webkit-text-stroke:0.65px;color:#666666;transform:scaleX(0.9067);">Sat</span>
<span class="t" style="left:1058.19px;top:832.17px;font-size:20.11px;font-weight:400;-webkit-text-stroke:0.65px;color:#666666;transform:scaleX(0.9119);">Sun</span>
<span class="t" style="left:1331.09px;top:832.17px;font-size:20.11px;font-weight:400;-webkit-text-stroke:0.65px;color:#666666;transform:scaleX(0.9087);">Mon</span>
<span class="t" style="left:1610.43px;top:832.17px;font-size:20.11px;font-weight:400;-webkit-text-stroke:0.65px;color:#666666;transform:scaleX(0.9062);">Tue</span>
<span class="t" style="left:1881.03px;top:832.17px;font-size:20.11px;font-weight:400;-webkit-text-stroke:0.65px;color:#666666;transform:scaleX(0.9133);">Wed</span>
<span class="t" style="left:2094.31px;top:192.03px;font-size:31.49px;font-weight:700;-webkit-text-stroke:0.85px;color:#212936;transform:scaleX(0.8999);">Order Status</span>
<span class="t" style="left:2069.22px;top:739.47px;font-size:26.81px;font-weight:400;-webkit-text-stroke:0.65px;color:#212936;transform:scaleX(0.9343);">Pending</span>
<span class="t" style="left:2793.61px;top:738.77px;font-size:27.21px;font-weight:400;-webkit-text-stroke:0.65px;color:#212936;transform:scaleX(0.9005);">116</span>
<span class="t" style="left:2069.22px;top:797.47px;font-size:26.81px;font-weight:400;-webkit-text-stroke:0.65px;color:#212936;transform:scaleX(0.9355);">Processing...</span>
<span class="t" style="left:2823.17px;top:796.77px;font-size:27.21px;font-weight:400;-webkit-text-stroke:0.65px;color:#212936;">0</span>
<span class="t" style="left:2070.21px;top:855.47px;font-size:26.81px;font-weight:400;-webkit-text-stroke:0.65px;color:#212936;transform:scaleX(0.9059);">Completed</span>
<span class="t" style="left:2823.88px;top:854.77px;font-size:27.21px;font-weight:400;-webkit-text-stroke:0.65px;color:#212936;transform:scaleX(0.9836);">3</span>
<span class="t" style="left:2070.21px;top:913.47px;font-size:26.81px;font-weight:400;-webkit-text-stroke:0.65px;color:#212936;transform:scaleX(0.9016);">Cancelled</span>
<span class="t" style="left:2809.81px;top:912.77px;font-size:27.21px;font-weight:400;-webkit-text-stroke:0.65px;color:#212936;transform:scaleX(0.9010);">11</span>
<span class="t" style="left:266.56px;top:972.53px;font-size:31.49px;font-weight:700;-webkit-text-stroke:0.85px;color:#212936;transform:scaleX(0.9098);">Recent Orders</span>
<span class="t" style="left:1826.75px;top:974.62px;font-size:25.06px;font-weight:400;-webkit-text-stroke:0.9px;color:#fff;transform:scaleX(0.8535);">View All</span>
<span class="t" style="left:202.68px;top:1098.93px;font-size:23.49px;font-weight:700;letter-spacing:0.5px;-webkit-text-stroke:0.85px;color:#000;transform:scaleX(1.1348);">ID</span>
<span class="t" style="left:363.12px;top:1062.93px;font-size:23.49px;font-weight:700;letter-spacing:0.5px;-webkit-text-stroke:0.85px;color:#000;transform:scaleX(0.9673);">ROOM</span>
<span class="t" style="left:363.13px;top:1098.93px;font-size:23.49px;font-weight:700;letter-spacing:0.5px;-webkit-text-stroke:0.85px;color:#000;transform:scaleX(0.9617);">NUMBER</span>
<span class="t" style="left:603.54px;top:1098.93px;font-size:23.49px;font-weight:700;letter-spacing:0.5px;-webkit-text-stroke:0.85px;color:#000;transform:scaleX(0.9705);">ORDER TYPE</span>
<span class="t" style="left:1367.82px;top:1098.93px;font-size:23.49px;font-weight:700;letter-spacing:0.5px;-webkit-text-stroke:0.85px;color:#000;transform:scaleX(0.9969);">STATUS</span>
<span class="t" style="left:1575.94px;top:1098.93px;font-size:23.49px;font-weight:700;letter-spacing:0.5px;-webkit-text-stroke:0.85px;color:#000;transform:scaleX(0.9743);">ORDER DATE</span>
<span class="t" style="left:1816.81px;top:1098.93px;font-size:23.49px;font-weight:700;letter-spacing:0.5px;-webkit-text-stroke:0.85px;color:#000;transform:scaleX(0.9890);">ACTIONS</span>
<span class="t" style="left:203.99px;top:1183.13px;font-size:26.69px;font-weight:700;-webkit-text-stroke:0.85px;color:#222529;transform:scaleX(0.9139);">#553</span>
<span class="t" style="left:363.05px;top:1183.17px;font-size:26.81px;font-weight:400;-webkit-text-stroke:0.65px;color:#222529;transform:scaleX(0.8625);">615</span>
<span class="t" style="left:675.11px;top:1166.37px;font-size:25.21px;font-weight:400;-webkit-text-stroke:0.65px;color:#222529;transform:scaleX(0.9056);">Service Orders</span>
<span class="t" style="left:674.47px;top:1205.12px;font-size:23.61px;font-weight:400;-webkit-text-stroke:0.65px;color:#6e757c;transform:scaleX(0.8710);">Menu Item (x100) +2</span>
<span class="t" style="left:1380.26px;top:1185.68px;font-size:21.89px;font-weight:700;letter-spacing:0.5px;-webkit-text-stroke:0.85px;color:#222529;transform:scaleX(0.9658);">DELIVERED</span>
<span class="t" style="left:1575.47px;top:1182.97px;font-size:26.81px;font-weight:400;-webkit-text-stroke:0.65px;color:#222529;transform:scaleX(0.8694);">Dec 22, 21:02</span>
<span class="t" style="left:203.99px;top:1289.13px;font-size:26.69px;font-weight:700;-webkit-text-stroke:0.85px;color:#222529;transform:scaleX(0.9152);">#552</span>
<span class="t" style="left:363.05px;top:1289.17px;font-size:26.81px;font-weight:400;-webkit-text-stroke:0.65px;color:#222529;transform:scaleX(0.8625);">615</span>
<span class="t" style="left:674.34px;top:1272.37px;font-size:25.21px;font-weight:400;-webkit-text-stroke:0.65px;color:#222529;transform:scaleX(0.9122);">Restaurant Orders</span>
<span class="t" style="left:674.45px;top:1311.12px;font-size:23.61px;font-weight:400;-webkit-text-stroke:0.65px;color:#6e757c;transform:scaleX(0.8824);">Menu Item (x4)</span>
<span class="t" style="left:1380.24px;top:1291.13px;font-size:21.89px;font-weight:700;letter-spacing:0.5px;-webkit-text-stroke:0.85px;color:#f5c344;transform:scaleX(0.9765);">PENDING</span>
<span class="t" style="left:1575.48px;top:1288.97px;font-size:26.81px;font-weight:400;-webkit-text-stroke:0.65px;color:#222529;transform:scaleX(0.8656);">Dec 22, 20:40</span>
<span class="t" style="left:204.01px;top:1395.13px;font-size:26.69px;font-weight:700;-webkit-text-stroke:0.85px;color:#222529;transform:scaleX(0.8953);">#551</span>
<span class="t" style="left:362.12px;top:1395.17px;font-size:26.81px;font-weight:400;-webkit-text-stroke:0.65px;color:#222529;transform:scaleX(0.8833);">102</span>
<span class="t" style="left:675.11px;top:1378.37px;font-size:25.21px;font-weight:400;-webkit-text-stroke:0.65px;color:#222529;transform:scaleX(0.9056);">Service Orders</span>
<span class="t" style="left:674.46px;top:1417.12px;font-size:23.61px;font-weight:400;-webkit-text-stroke:0.65px;color:#6e757c;transform:scaleX(0.8779);">Menu Item (x1)</span>
<span class="t" style="left:1380.26px;top:1397.68px;font-size:21.89px;font-weight:700;letter-spacing:0.5px;-webkit-text-stroke:0.85px;color:#222529;transform:scaleX(0.9658);">DELIVERED</span>
<span class="t" style="left:1575.48px;top:1394.97px;font-size:26.81px;font-weight:400;-webkit-text-stroke:0.65px;color:#222529;transform:scaleX(0.8656);">Dec 19, 12:50</span>
<span class="t" style="left:204.00px;top:1501.13px;font-size:26.69px;font-weight:700;-webkit-text-stroke:0.85px;color:#222529;transform:scaleX(0.9031);">#550</span>
<span class="t" style="left:362.12px;top:1501.17px;font-size:26.81px;font-weight:400;-webkit-text-stroke:0.65px;color:#222529;transform:scaleX(0.8833);">102</span>
<span class="t" style="left:674.34px;top:1484.37px;font-size:25.21px;font-weight:400;-webkit-text-stroke:0.65px;color:#222529;transform:scaleX(0.9122);">Restaurant Orders</span>
<span class="t" style="left:1380.26px;top:1503.68px;font-size:21.89px;font-weight:700;letter-spacing:0.5px;-webkit-text-stroke:0.85px;color:#222529;transform:scaleX(0.9658);">DELIVERED</span>
<span class="t" style="left:1575.48px;top:1500.97px;font-size:26.81px;font-weight:400;-webkit-text-stroke:0.65px;color:#222529;transform:scaleX(0.8656);">Dec 19, 12:50</span>
<span class="t" style="left:2093.59px;top:1055.63px;font-size:31.49px;font-weight:700;-webkit-text-stroke:0.85px;color:#212936;transform:scaleX(0.9132);">Room Occupancy</span>
<span class="t" style="left:2388.11px;top:1227.13px;font-size:41.09px;font-weight:700;-webkit-text-stroke:0.85px;color:#212936;transform:scaleX(1.0143);">75%</span>
<span class="t" style="left:2380.05px;top:1280.97px;font-size:22.61px;font-weight:400;-webkit-text-stroke:0.65px;color:#6e757c;transform:scaleX(0.9358);">Occupancy</span>
<span class="t" style="left:2136.08px;top:1437.47px;font-size:35.61px;font-weight:400;-webkit-text-stroke:0.65px;color:#212936;transform:scaleX(0.8501);">14</span>
<span class="t" style="left:2090.64px;top:1494.77px;font-size:25.21px;font-weight:400;-webkit-text-stroke:0.65px;color:#6e757c;transform:scaleX(0.8719);">Total Rooms</span>
<span class="t" style="left:2429.52px;top:1437.47px;font-size:35.61px;font-weight:400;-webkit-text-stroke:0.65px;color:#212936;transform:scaleX(0.8297);">5</span>
<span class="t" style="left:2388.94px;top:1494.77px;font-size:25.21px;font-weight:400;-webkit-text-stroke:0.65px;color:#6e757c;transform:scaleX(0.8499);">Occupied</span>
<span class="t" style="left:2712.38px;top:1437.47px;font-size:35.61px;font-weight:400;-webkit-text-stroke:0.65px;color:#212936;transform:scaleX(0.8414);">9</span>
<span class="t" style="left:2674.41px;top:1494.77px;font-size:25.21px;font-weight:400;-webkit-text-stroke:0.65px;color:#6e757c;transform:scaleX(0.8405);">Available</span>
<div class="b" style="left:150px;top:1524px;width:2700px;height:200px;box-shadow:0 0 80px 0 rgba(0,0,0,.16);"></div>
<div class="b" style="left:160px;top:1452px;width:200px;height:56px;border-radius:11px;background:#5a5a5a;border:2px solid #0a0a0a;box-sizing:border-box;box-shadow:0 0 0 1px rgba(255,255,255,.13) inset;"></div>
<svg class="i" style="left:230px;top:1500px;width:60px;height:24px" viewBox="230 1500 60 24"><path d="M240 1507C248 1507 250.5 1509.5 254 1514.5L259.6 1522.6L265.2 1514.5C268.7 1509.5 271.2 1507 279.2 1507" fill="#5a5a5a" stroke="#0a0a0a" stroke-width="2" stroke-linejoin="round"/><rect x="244" y="1503" width="31.2" height="4.6" fill="#5a5a5a"/></svg>
<span class="t" style="left:186.88px;top:1466.95px;font-size:26.85px;font-weight:400;font-family:'Liberation Sans',sans-serif;-webkit-text-stroke:0.25px;color:#fff;transform:scaleX(1.0880);">Launchpad</span>
<div class="b" style="left:0;top:0;width:2894px;height:8px;background:#333"></div><div class="b" style="left:584px;top:0;width:295px;height:7.6px;background:#5f5f5f"></div><div class="b" style="left:290px;top:0;width:2px;height:7px;background:#6a6a6a"></div><div class="b" style="left:583px;top:0;width:2px;height:7px;background:#6a6a6a"></div><div class="b" style="left:878px;top:0;width:2px;height:7px;background:#6a6a6a"></div><div class="b" style="left:1172px;top:0;width:2px;height:7px;background:#6a6a6a"></div><div class="b" style="left:1466px;top:0;width:2px;height:7px;background:#6a6a6a"></div><div class="b" style="left:1760px;top:0;width:2px;height:7px;background:#6a6a6a"></div><div class="b" style="left:2054px;top:0;width:2px;height:7px;background:#6a6a6a"></div><div class="b" style="left:2348px;top:0;width:2px;height:7px;background:#6a6a6a"></div><div class="b" style="left:2641px;top:0;width:2px;height:7px;background:#6a6a6a"></div><div class="b" style="left:0;top:7.4px;width:2894px;height:0.9px;background:#0c0c0c"></div>
</div></body></html>
